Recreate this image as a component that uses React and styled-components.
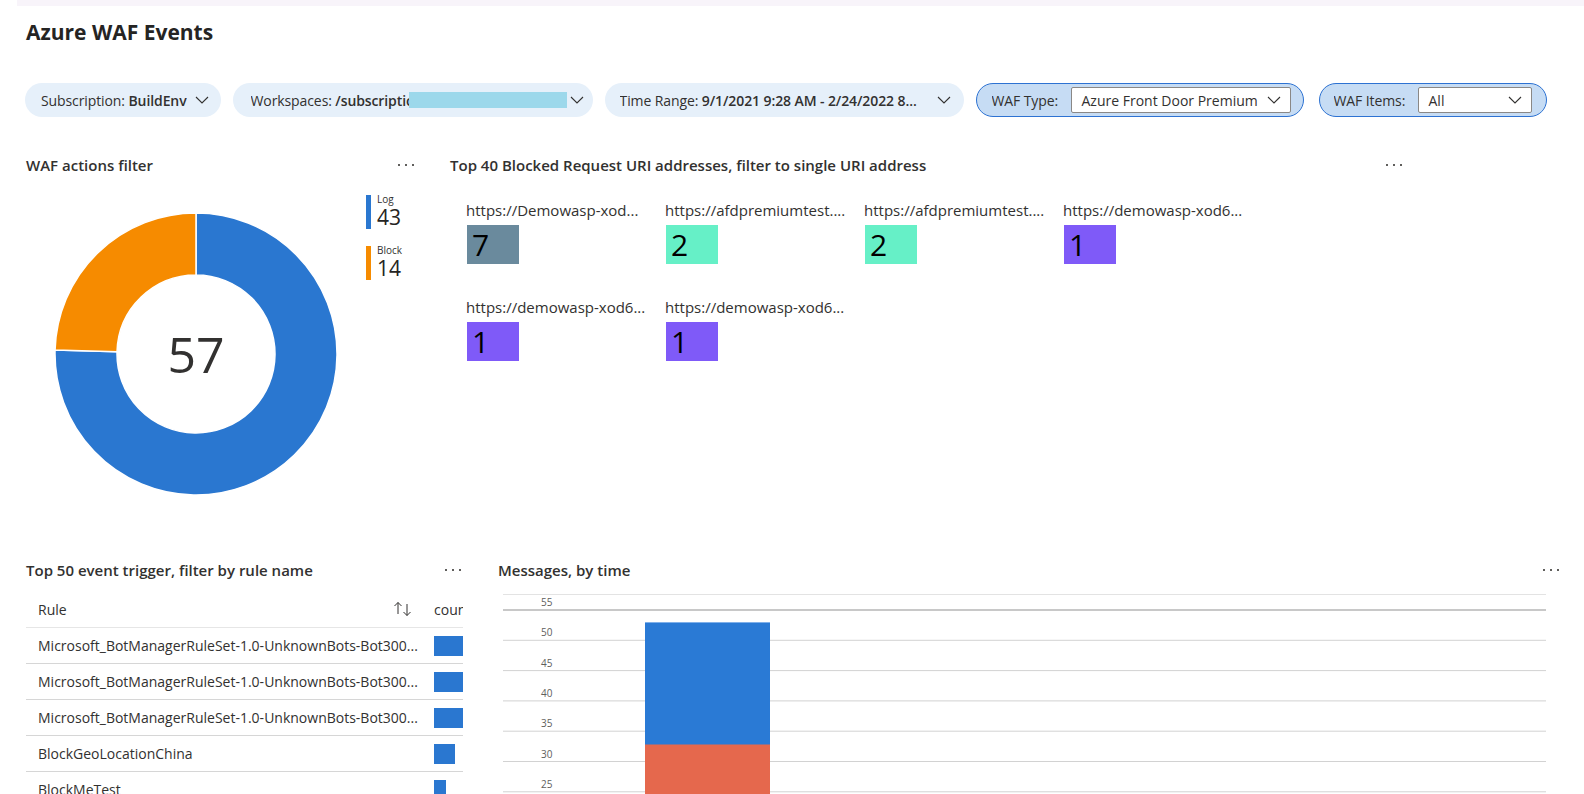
import React from "react";
import styled, { createGlobalStyle } from "styled-components";

const GlobalStyle = createGlobalStyle`
  html, body {
    margin: 0;
    padding: 0;
    background: #ffffff;
  }
  body {
    font-family: "Open Sans", "Noto Sans", sans-serif;
    color: #323130;
  }
`;

const BLUE = "#2a77d0";
const ORANGE = "#f68b00";

const legend = [
  { label: "Log", value: 43, color: BLUE },
  { label: "Block", value: 14, color: ORANGE },
];

const tiles = [
  { url: "https://Demowasp-xod...", count: 7, color: "#6a8a9d" },
  { url: "https://afdpremiumtest....", count: 2, color: "#66f0c7" },
  { url: "https://afdpremiumtest....", count: 2, color: "#66f0c7" },
  { url: "https://demowasp-xod6...", count: 1, color: "#7f5af8" },
  { url: "https://demowasp-xod6...", count: 1, color: "#7f5af8" },
  { url: "https://demowasp-xod6...", count: 1, color: "#7f5af8" },
];

const rules = [
  { name: "Microsoft_BotManagerRuleSet-1.0-UnknownBots-Bot300...", bar: 32 },
  { name: "Microsoft_BotManagerRuleSet-1.0-UnknownBots-Bot300...", bar: 32 },
  { name: "Microsoft_BotManagerRuleSet-1.0-UnknownBots-Bot300...", bar: 32 },
  { name: "BlockGeoLocationChina", bar: 21 },
  { name: "BlockMeTest", bar: 12 },
];

const Page = styled.div`
  width: 1584px;
  height: 794px;
  overflow: hidden;
  box-sizing: border-box;
  padding-left: 26px;
`;

const TopStrip = styled.div`
  height: 6px;
  margin-left: -9px;
  background: #f8f4fa;
`;

const Title = styled.h1`
  margin: 14px 0 0 0;
  font-size: 21px;
  line-height: 24px;
  font-weight: 700;
  color: #252423;
`;

const FilterBar = styled.div`
  display: flex;
  align-items: center;
  gap: 12px;
  margin: 39px 0 0 -1px;
`;

const Pill = styled.div`
  display: flex;
  align-items: center;
  box-sizing: border-box;
  height: 34px;
  border-radius: 17px;
  font-size: 14px;
  white-space: nowrap;
  width: ${(p) => (p.$w ? `${p.$w}px` : "auto")};
  padding: ${(p) => p.$pad || "0 12px 0 16px"};
  margin-left: ${(p) => p.$ml || 0}px;
  gap: ${(p) => (p.$gap !== undefined ? p.$gap : 8)}px;
  background: ${(p) => (p.$active ? "#c6dcf4" : "#e6f0fa")};
  border: ${(p) => (p.$active ? "1px solid #2d72d2" : "none")};
  justify-content: ${(p) => (p.$active ? "space-between" : "flex-start")};
`;

const PillText = styled.span`
  display: block;
  overflow: hidden;
  letter-spacing: -0.1px;
  width: ${(p) => (p.$w ? `${p.$w}px` : "auto")};
  flex: none;
  b {
    font-weight: 600;
  }
`;

const Redacted = styled.span`
  display: block;
  flex: none;
  width: 158px;
  height: 16px;
  background: #9cd8eb;
`;

const SelectBox = styled.div`
  display: flex;
  align-items: center;
  justify-content: space-between;
  box-sizing: border-box;
  height: 26px;
  width: ${(p) => p.$w}px;
  padding: 0 9px 0 10px;
  background: #ffffff;
  border: 1px solid #8a8886;
  border-radius: 2px;
`;

const ChevronPush = styled.span`
  margin-left: auto;
  display: flex;
`;

const Row = styled.div`
  display: grid;
  grid-template-columns: ${(p) => p.$cols};
  column-gap: ${(p) => p.$gap}px;
  height: ${(p) => p.$h}px;
  margin-top: ${(p) => p.$mt}px;
`;

const Panel = styled.section`
  display: flex;
  flex-direction: column;
  min-width: 0;
`;

const PanelHeader = styled.div`
  display: flex;
  align-items: center;
  justify-content: space-between;
  height: 20px;
  font-size: 15px;
  font-weight: 600;
  color: #323130;
  white-space: nowrap;
  padding-right: ${(p) => p.$pr || 0}px;
`;

const DonutBody = styled.div`
  display: flex;
  align-items: flex-start;
`;

const DonutSvg = styled.svg`
  margin: 37px 0 0 28px;
  flex: none;
`;

const Legend = styled.div`
  display: flex;
  flex-direction: column;
  gap: 16px;
  margin: 20px 0 0 28px;
`;

const LegendItem = styled.div`
  display: flex;
  gap: 6px;
`;

const LegendBar = styled.div`
  width: 5px;
  height: 34px;
  background: ${(p) => p.$color};
`;

const LegendText = styled.div`
  display: flex;
  flex-direction: column;
  margin-top: -2px;
  span {
    font-size: 10px;
    line-height: 12px;
  }
  strong {
    font-size: 21px;
    line-height: 25px;
    font-weight: 400;
    color: #252423;
  }
`;

const TileGrid = styled.div`
  display: grid;
  grid-template-columns: repeat(4, 199px);
  row-gap: 34px;
  padding: 26px 0 0 16px;
`;

const TileCell = styled.div`
  display: flex;
  flex-direction: column;
  gap: 6px;
`;

const TileLabel = styled.div`
  font-size: 15px;
  line-height: 18px;
  white-space: nowrap;
`;

const Tile = styled.div`
  width: 52px;
  height: 39px;
  margin-left: 1px;
  box-sizing: border-box;
  padding-left: 5px;
  font-size: 30px;
  font-weight: 500;
  line-height: 39px;
  color: #000000;
  background: ${(p) => p.$color};
`;

const Table = styled.div`
  margin-top: 11px;
  width: 437px;
  overflow: hidden;
`;

const TableRow = styled.div`
  display: grid;
  grid-template-columns: 408px 29px;
  align-items: center;
  height: ${(p) => (p.$head ? 36 : 35)}px;
  border-bottom: 1px solid ${(p) => (p.$head ? "#e6e6e6" : "#d6d6d6")};
  font-size: 14px;
`;

const RuleCell = styled.div`
  display: flex;
  align-items: center;
  justify-content: space-between;
  padding: ${(p) => (p.$head ? "0 21px 0 12px" : "0 4px 0 12px")};
  white-space: nowrap;
  overflow: hidden;
  span {
    overflow: hidden;
    text-overflow: ellipsis;
  }
`;

const CountCell = styled.div`
  overflow: hidden;
  white-space: nowrap;
`;

const CountBar = styled.div`
  height: 20px;
  background: ${BLUE};
`;

const ChartSvg = styled.svg`
  display: block;
  margin: 10px 0 0 5px;
`;

function Chevron() {
  return (
    <svg width="14" height="8" viewBox="0 0 14 8">
      <polyline points="1,1 7,7 13,1" fill="none" stroke="#323130" strokeWidth="1.1" />
    </svg>
  );
}

function More() {
  return (
    <svg width="16" height="3" viewBox="0 0 16 3">
      <rect x="0" y="0" width="2" height="2" fill="#605e5c" />
      <rect x="7" y="0" width="2" height="2" fill="#605e5c" />
      <rect x="14" y="0" width="2" height="2" fill="#605e5c" />
    </svg>
  );
}

function SortIcon() {
  return (
    <svg width="20" height="16" viewBox="0 0 20 16">
      <g fill="none" stroke="#323130" strokeWidth="1">
        <path d="M5 1.5 V13 M1.5 5 L5 1.5 L8.5 5" />
        <path d="M14 3 V14.5 M10.5 11 L14 14.5 L17.5 11" />
      </g>
    </svg>
  );
}

function Donut() {
  const cx = 142;
  const cy = 142;
  const R = 141;
  const r = 79;
  const total = 57;
  const a = (14 / total) * 2 * Math.PI;
  const s = Math.sin(a);
  const c = Math.cos(a);
  const o1 = [cx - R * s, cy - R * c];
  const i1 = [cx - r * s, cy - r * c];
  const orange = `M${cx} ${cy - R} A${R} ${R} 0 0 0 ${o1[0]} ${o1[1]} L${i1[0]} ${i1[1]} A${r} ${r} 0 0 1 ${cx} ${cy - r} Z`;
  const blue = `M${cx} ${cy - R} A${R} ${R} 0 1 1 ${o1[0]} ${o1[1]} L${i1[0]} ${i1[1]} A${r} ${r} 0 1 0 ${cx} ${cy - r} Z`;
  return (
    <DonutSvg width="284" height="284" viewBox="0 0 284 284">
      <path d={blue} fill={BLUE} stroke="#ffffff" strokeWidth="1.5" />
      <path d={orange} fill={ORANGE} stroke="#ffffff" strokeWidth="1.5" />
      <text
        x={cx}
        y={cy + 19}
        textAnchor="middle"
        fontSize="50"
        fill="#323130"
        fontFamily="Open Sans, sans-serif"
      >
        57
      </text>
    </DonutSvg>
  );
}

function MessagesChart() {
  const labels = [55, 50, 45, 40, 35, 30, 25];
  const pitch = 30.3;
  return (
    <ChartSvg width="1043" height="204" viewBox="0 0 1043 204">
      <line x1="0" x2="1043" y1="4.5" y2="4.5" stroke="#e3e3e3" strokeWidth="1" />
      {labels.map((v, i) => {
        const y = 20 + i * pitch;
        return (
          <g key={v}>
            <line
              x1="0"
              x2="1043"
              y1={y}
              y2={y}
              stroke={i === 0 ? "#c8c8c8" : "#d2d2d2"}
              strokeWidth={i === 0 ? 2 : 1}
            />
            <text x="38" y={y - 4} fontSize="10" fill="#605e5c" fontFamily="Open Sans, sans-serif">
              {v}
            </text>
          </g>
        );
      })}
      <rect x="142" y="32" width="125" height="123" fill="#2a7ad5" />
      <line x1="142" x2="267" y1="32.5" y2="32.5" stroke="#7fb0ea" strokeWidth="1" />
      <rect x="142" y="154.5" width="125" height="60" fill="#e5684d" />
    </ChartSvg>
  );
}

export default function App() {
  return (
    <>
      <GlobalStyle />
      <Page>
        <TopStrip />
        <Title>Azure WAF Events</Title>

        <FilterBar>
          <Pill>
            <PillText>
              Subscription: <b>BuildEnv</b>
            </PillText>
            <Chevron />
          </Pill>
          <Pill $w={360} $pad="0 9px 0 18px" $gap={0}>
            <PillText $w={158}>
              Workspaces: <b>/subscriptio</b>
            </PillText>
            <Redacted />
            <ChevronPush>
              <Chevron />
            </ChevronPush>
          </Pill>
          <Pill $w={359} $pad="0 13px 0 15px">
            <PillText>
              Time Range: <b>9/1/2021 9:28 AM - 2/24/2022 8...</b>
            </PillText>
            <ChevronPush>
              <Chevron />
            </ChevronPush>
          </Pill>
          <Pill $active $w={328} $pad="0 12px 0 15px">
            <PillText>WAF Type:</PillText>
            <SelectBox $w={220}>
              <span>Azure Front Door Premium</span>
              <Chevron />
            </SelectBox>
          </Pill>
          <Pill $active $w={228} $pad="0 14px 0 14px" $ml={3}>
            <PillText>WAF Items:</PillText>
            <SelectBox $w={114}>
              <span>All</span>
              <Chevron />
            </SelectBox>
          </Pill>
        </FilterBar>

        <Row $cols="390px 955px" $gap={34} $h={405} $mt={38}>
          <Panel>
            <PanelHeader $pr={2}>
              <span>WAF actions filter</span>
              <More />
            </PanelHeader>
            <DonutBody>
              <Donut />
              <Legend>
                {legend.map((l) => (
                  <LegendItem key={l.label}>
                    <LegendBar $color={l.color} />
                    <LegendText>
                      <span>{l.label}</span>
                      <strong>{l.value}</strong>
                    </LegendText>
                  </LegendItem>
                ))}
              </Legend>
            </DonutBody>
          </Panel>
          <Panel>
            <PanelHeader $pr={3}>
              <span>Top 40 Blocked Request URI addresses, filter to single URI address</span>
              <More />
            </PanelHeader>
            <TileGrid>
              {tiles.map((t, i) => (
                <TileCell key={i}>
                  <TileLabel>{t.url}</TileLabel>
                  <Tile $color={t.color}>{t.count}</Tile>
                </TileCell>
              ))}
            </TileGrid>
          </Panel>
        </Row>

        <Row $cols="437px 1063px" $gap={35} $h={234} $mt={0}>
          <Panel>
            <PanelHeader $pr={2}>
              <span>Top 50 event trigger, filter by rule name</span>
              <More />
            </PanelHeader>
            <Table>
              <TableRow $head>
                <RuleCell $head>
                  <span>Rule</span>
                  <SortIcon />
                </RuleCell>
                <CountCell>count</CountCell>
              </TableRow>
              {rules.map((r, i) => (
                <TableRow key={i}>
                  <RuleCell>
                    <span>{r.name}</span>
                  </RuleCell>
                  <CountCell>
                    <CountBar style={{ width: r.bar }} />
                  </CountCell>
                </TableRow>
              ))}
            </Table>
          </Panel>
          <Panel>
            <PanelHeader $pr={2}>
              <span>Messages, by time</span>
              <More />
            </PanelHeader>
            <MessagesChart />
          </Panel>
        </Row>
      </Page>
    </>
  );
}
